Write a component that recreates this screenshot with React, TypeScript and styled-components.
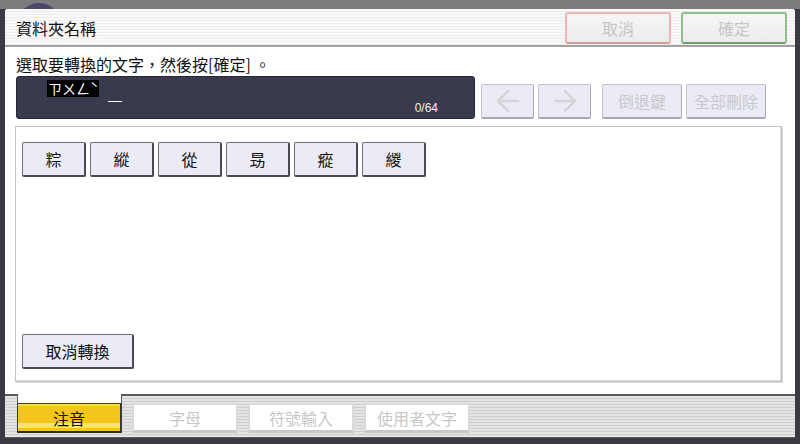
import React from 'react';
import styled, { createGlobalStyle } from 'styled-components';
import { ArrowLeft, ArrowRight } from 'lucide-react';

const GlobalStyle = createGlobalStyle`
  html, body {
    margin: 0;
    padding: 0;
    width: 800px;
    height: 444px;
    overflow: hidden;
  }

  body {
    font-family: "Noto Sans CJK TC", "Noto Sans CJK SC", "Liberation Sans", sans-serif;
  }
`;

const Screen = styled.div`
  position: relative;
  width: 800px;
  height: 444px;
  box-sizing: border-box;
  padding: 9px 5px 0 5px;
  background: linear-gradient(to bottom, #7c7c7c 0 9px, #3a3a42 9px);
  overflow: hidden;
`;

const Blob = styled.div`
  position: absolute;
  left: 20px;
  top: 3px;
  width: 38px;
  height: 30px;
  border-radius: 50%;
  background: #4f4670;
`;

const Window = styled.div`
  position: relative;
  display: flex;
  flex-direction: column;
  width: 790px;
  height: 429px;
  background: #fff;
  border-radius: 3px 3px 0 0;
  overflow: hidden;
`;

const TitleBar = styled.div`
  display: flex;
  align-items: flex-start;
  height: 38px;
  box-sizing: border-box;
  padding: 3px 8px 0 11px;
  background: repeating-linear-gradient(to bottom, #f9f9f9 0 2px, #ededed 2px 3px);
  border-bottom: 2px solid #a2a2a2;
`;

const Title = styled.div`
  flex: 1;
  font-size: 16px;
  line-height: 32px;
  color: #111;
`;

const TitleButton = styled.button<{ $tone: 'red' | 'green' }>`
  width: 106px;
  height: 32px;
  margin-left: ${({ $tone }) => ($tone === 'green' ? '10px' : '0')};
  padding: 0;
  box-sizing: border-box;
  border: 2px solid ${({ $tone }) => ($tone === 'green' ? '#8cbf8c' : '#ebb6b6')};
  border-bottom-color: ${({ $tone }) => ($tone === 'green' ? '#6f9f6f' : '#d39c9c')};
  border-radius: 3px;
  background: linear-gradient(to bottom, #f6f6f6, #ececec);
  color: #c6c6c6;
  font-family: inherit;
  font-size: 16px;
  line-height: 26px;
`;

const Body = styled.div`
  display: flex;
  flex-direction: column;
  padding: 0 13px 0 10px;
`;

const Prompt = styled.div`
  height: 29px;
  padding: 6px 0 0 1px;
  box-sizing: border-box;
  font-size: 16px;
  line-height: 22px;
  color: #111;
  white-space: nowrap;
`;

const InputRow = styled.div`
  display: flex;
  align-items: flex-end;
  height: 43px;
  padding-left: 1px;
`;

const InputBox = styled.div`
  position: relative;
  width: 459px;
  height: 43px;
  box-sizing: border-box;
  padding: 3px 0 0 30px;
  background: #3a3a4f;
  border: 1px solid #26263a;
  border-radius: 3px;
  display: flex;
  align-items: flex-start;
`;

const Composing = styled.span`
  display: inline-block;
  background: #000;
  color: #fff;
  font-size: 14px;
  line-height: 17px;
  height: 17px;
  padding: 0 1px;
`;

const Caret = styled.span`
  display: inline-block;
  width: 14px;
  height: 21px;
  margin-left: 9px;
  border-bottom: 1px solid #fff;
`;

const Counter = styled.span`
  position: absolute;
  right: 36px;
  bottom: 3px;
  font-family: "Liberation Sans Narrow", "Liberation Sans", sans-serif;
  font-size: 12px;
  line-height: 13px;
  color: #f0f0f0;
`;

const EditButton = styled.button<{ $w: number; $gap: number }>`
  display: flex;
  align-items: center;
  justify-content: center;
  width: ${({ $w }) => $w}px;
  height: 35px;
  margin-left: ${({ $gap }) => $gap}px;
  padding: 0;
  box-sizing: border-box;
  background: #ebebf5;
  border: 1px solid #c4c4d0;
  border-right-color: #a9a9b6;
  border-bottom: 2px solid #a9a9b6;
  border-radius: 2px;
  color: #c8c8cc;
  font-family: inherit;
  font-size: 16px;
  line-height: 20px;
`;

const Panel = styled.div`
  display: flex;
  flex-direction: column;
  justify-content: space-between;
  width: 767px;
  height: 256px;
  margin-top: 7px;
  box-sizing: border-box;
  padding: 15px 6px 12px 6px;
  border: 1px solid #c4c4c4;
  box-shadow: inset -1px -1px 0 #dcdcdc, 1px 1px 0 #d8d8d8;
`;

const CandidateRow = styled.div`
  display: flex;
  gap: 4px;
`;

const KeyButton = styled.button<{ $w: number }>`
  width: ${({ $w }) => $w}px;
  height: 35px;
  padding: 0;
  box-sizing: border-box;
  background: #ebebf5;
  border: 1px solid #6e6e7a;
  border-right: 2px solid #4a4a56;
  border-bottom: 2px solid #4a4a56;
  border-radius: 2px;
  color: #111;
  font-family: inherit;
  font-size: 16px;
  line-height: 20px;
`;

const Gap = styled.div`
  height: 12px;
`;

const TabStrip = styled.div`
  display: flex;
  align-items: flex-start;
  flex: 1;
  padding-left: 12px;
  border-top: 2px solid #5a5a5a;
  border-bottom: 1px solid #5a5a5a;
  background: repeating-linear-gradient(to bottom, #e4e4e4 0 2px, #cdcdcd 2px 3px);
`;

const ActiveSlot = styled.div`
  margin-top: -2px;
  padding-top: 9px;
  background: linear-gradient(to right, #5a5a5a 0 1px, #fff 1px calc(100% - 1px), #5a5a5a calc(100% - 1px)) top / 100% 9px no-repeat;
`;

const Tab = styled.button<{ $active?: boolean }>`
  width: ${({ $active }) => ($active ? 105 : 106)}px;
  height: 30px;
  margin-left: ${({ $active }) => ($active ? 0 : 10)}px;
  margin-top: ${({ $active }) => ($active ? 0 : 7)}px;
  padding: 0;
  box-sizing: border-box;
  font-family: inherit;
  font-size: 16px;
  line-height: 20px;
  border-radius: 1px;
  color: ${({ $active }) => ($active ? '#111' : '#c8c8c8')};
  background: ${({ $active }) =>
    $active
      ? 'linear-gradient(to bottom, #f8da52 0 2px, #f4c51c 2px 72%, #f9e27a 72% 88%, #f4c51c 88%)'
      : '#fff'};
  border: ${({ $active }) => ($active ? '1px solid #3a3a3a' : '2px solid #dadada')};
  border-bottom: ${({ $active }) => ($active ? '2px solid #2c2c2c' : '3px solid #c8c8c8')};
  border-right-width: 2px;
`;

const candidates = ['粽', '縱', '從', '昮', '瘲', '緵'];
const tabs = ['字母', '符號輸入', '使用者文字'];

export default function App(): React.ReactElement {
  return (
    <Screen>
      <GlobalStyle />
      <Blob />
      <Window>
        <TitleBar>
          <Title>資料夾名稱</Title>
          <TitleButton $tone='red'>取消</TitleButton>
          <TitleButton $tone='green'>確定</TitleButton>
        </TitleBar>
        <Body>
          <Prompt>選取要轉換的文字，然後按[確定] 。</Prompt>
          <InputRow>
            <InputBox>
              <Composing>ㄗㄨㄥˋ</Composing>
              <Caret />
              <Counter>0/64</Counter>
            </InputBox>
            <EditButton $w={53} $gap={6}>
              <ArrowLeft size={34} strokeWidth={1.75} color='#d4d4d8' />
            </EditButton>
            <EditButton $w={53} $gap={4}>
              <ArrowRight size={34} strokeWidth={1.75} color='#d4d4d8' />
            </EditButton>
            <EditButton $w={80} $gap={11}>倒退鍵</EditButton>
            <EditButton $w={80} $gap={4}>全部刪除</EditButton>
          </InputRow>
          <Panel>
            <CandidateRow>
              {candidates.map((c) => (
                <KeyButton key={c} $w={64}>{c}</KeyButton>
              ))}
            </CandidateRow>
            <CandidateRow>
              <KeyButton $w={112}>取消轉換</KeyButton>
            </CandidateRow>
          </Panel>
        </Body>
        <Gap />
        <TabStrip>
          <ActiveSlot>
            <Tab $active>注音</Tab>
          </ActiveSlot>
          {tabs.map((t) => (
            <Tab key={t}>{t}</Tab>
          ))}
        </TabStrip>
      </Window>
    </Screen>
  );
}
